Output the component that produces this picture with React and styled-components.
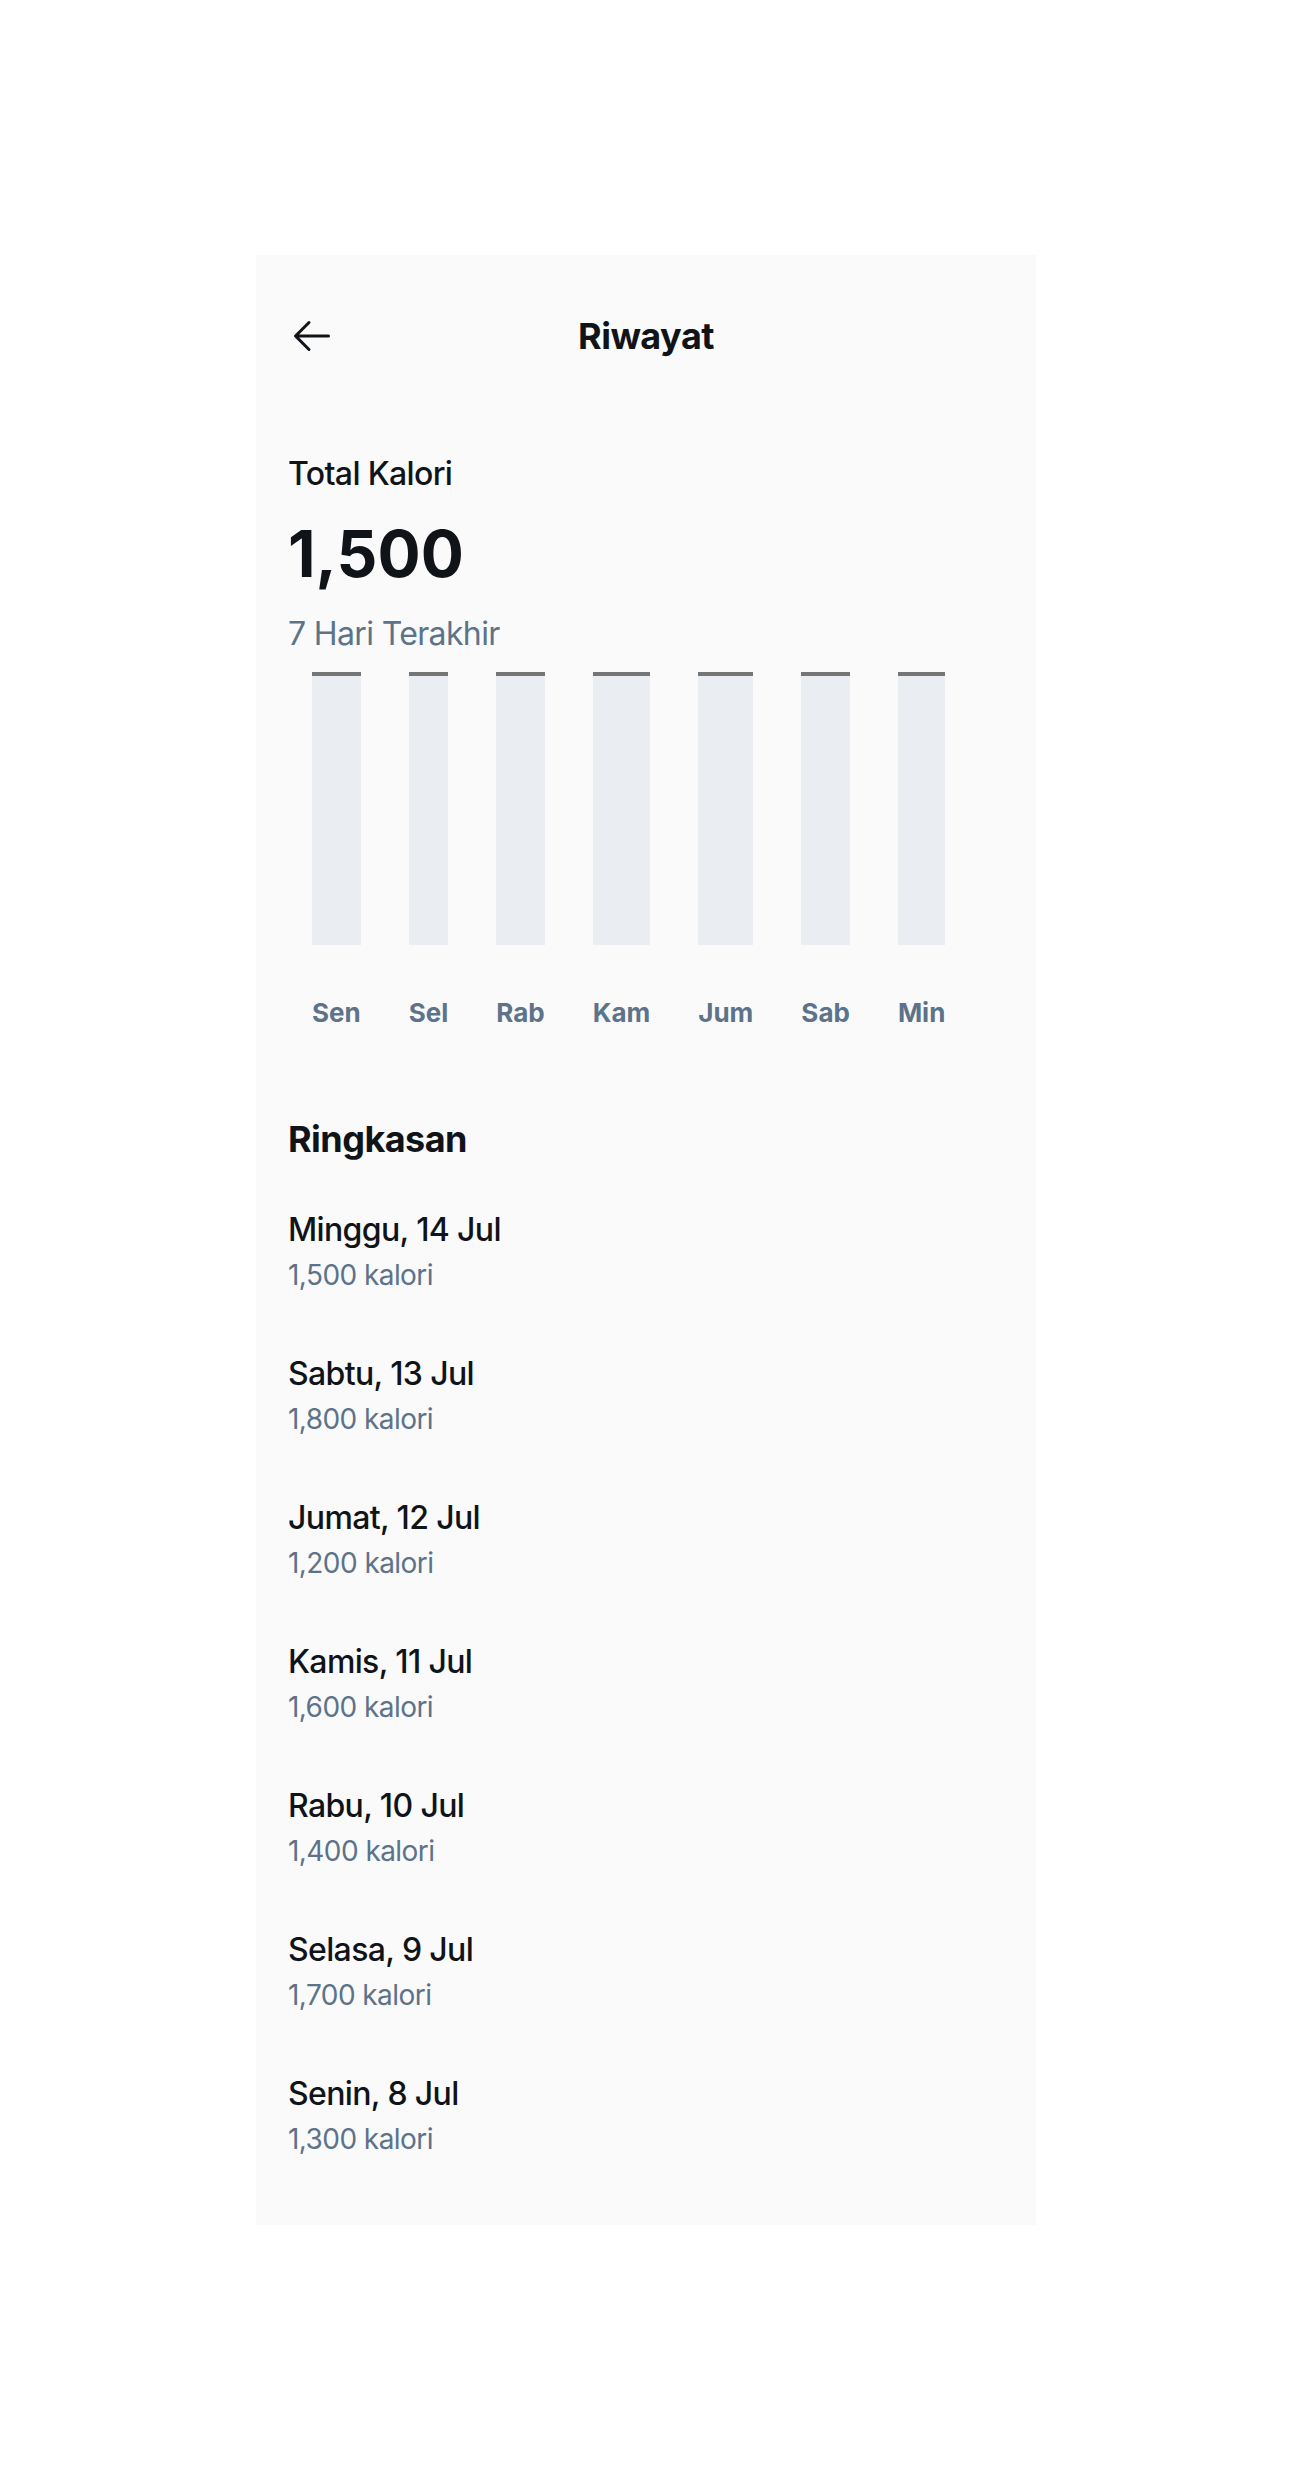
import React from 'react';
import styled, { createGlobalStyle } from 'styled-components';

const GlobalStyle = createGlobalStyle`
  body {
    margin: 0;
    background: #ffffff;
    font-family: Inter, "Liberation Sans", sans-serif;
  }
  #root {
    padding-top: 255px;
  }
`;

const Screen = styled.div`
  width: 780px;
  margin: 0 auto;
  background: #fafafa;
  padding-bottom: 38px;
`;

const Header = styled.div`
  display: flex;
  align-items: center;
  justify-content: space-between;
  padding: 33px 32px 16px;
`;

const BackButton = styled.div`
  width: 96px;
  height: 96px;
  display: flex;
  align-items: center;
  color: #101418;
`;

const Title = styled.h2`
  flex: 1;
  margin: 0;
  padding-right: 96px;
  text-align: center;
  font-size: 36px;
  font-weight: 700;
  line-height: 1.25;
  letter-spacing: -0.015em;
  color: #101418;
`;

const ChartSection = styled.div`
  display: flex;
  flex-direction: column;
  gap: 16px;
  padding: 50px 32px 48px;
`;

const Label = styled.p`
  margin: 0;
  font-size: 32px;
  font-weight: 500;
  line-height: 1.5;
  letter-spacing: -0.02em;
  color: #101418;
`;

const BigNumber = styled.p`
  margin: 0;
  font-size: 64px;
  font-weight: 700;
  line-height: 1.25;
  color: #101418;
`;

const Muted = styled.p`
  margin: 0;
  font-size: ${p => p.$size || 32}px;
  font-weight: 400;
  line-height: 1.5;
  letter-spacing: -0.02em;
  color: #5c738a;
`;

const Chart = styled.div`
  display: grid;
  grid-auto-flow: column;
  grid-template-rows: 1fr auto;
  grid-auto-columns: max-content;
  justify-content: start;
  gap: 48px;
  min-height: 360px;
  margin-top: -2px;
  padding: 0 24px;
`;

const Bar = styled.div`
  width: 100%;
  height: 100%;
  background: #eaedf1;
  border-top: 4px solid #757575;
  box-sizing: border-box;
`;

const DayLabel = styled.p`
  margin: 0;
  font-size: 26px;
  font-weight: 700;
  line-height: 1.5;
  color: #5c738a;
  text-align: center;
`;

const SectionTitle = styled.h2`
  margin: 0;
  padding: 37px 32px 17px;
  font-size: 36px;
  font-weight: 700;
  line-height: 1.25;
  letter-spacing: -0.015em;
  color: #101418;
`;

const Row = styled.div`
  display: flex;
  flex-direction: column;
  justify-content: center;
  min-height: 144px;
  padding: 16px 32px;
  box-sizing: border-box;
`;

const ArrowLeft = () => (
  <svg width="48" height="48" viewBox="0 0 256 256" fill="currentColor">
    <path d="M224,128a8,8,0,0,1-8,8H59.31l58.35,58.34a8,8,0,0,1-11.32,11.32l-72-72a8,8,0,0,1,0-11.32l72-72a8,8,0,0,1,11.32,11.32L59.31,120H216A8,8,0,0,1,224,128Z" />
  </svg>
);

const days = ['Sen', 'Sel', 'Rab', 'Kam', 'Jum', 'Sab', 'Min'];

const history = [
  { date: 'Minggu, 14 Jul', kal: '1,500' },
  { date: 'Sabtu, 13 Jul', kal: '1,800' },
  { date: 'Jumat, 12 Jul', kal: '1,200' },
  { date: 'Kamis, 11 Jul', kal: '1,600' },
  { date: 'Rabu, 10 Jul', kal: '1,400' },
  { date: 'Selasa, 9 Jul', kal: '1,700' },
  { date: 'Senin, 8 Jul', kal: '1,300' },
];

export default function App() {
  return (
    <>
      <GlobalStyle />
      <Screen>
        <Header>
          <BackButton>
            <ArrowLeft />
          </BackButton>
          <Title>Riwayat</Title>
        </Header>

        <ChartSection>
          <Label>Total Kalori</Label>
          <BigNumber>1,500</BigNumber>
          <Muted>7 Hari Terakhir</Muted>
          <Chart>
            {days.map(d => (
              <React.Fragment key={d}>
                <Bar />
                <DayLabel>{d}</DayLabel>
              </React.Fragment>
            ))}
          </Chart>
        </ChartSection>

        <SectionTitle>Ringkasan</SectionTitle>
        {history.map(h => (
          <Row key={h.date}>
            <Label>{h.date}</Label>
            <Muted $size={28}>{h.kal} kalori</Muted>
          </Row>
        ))}
      </Screen>
    </>
  );
}
